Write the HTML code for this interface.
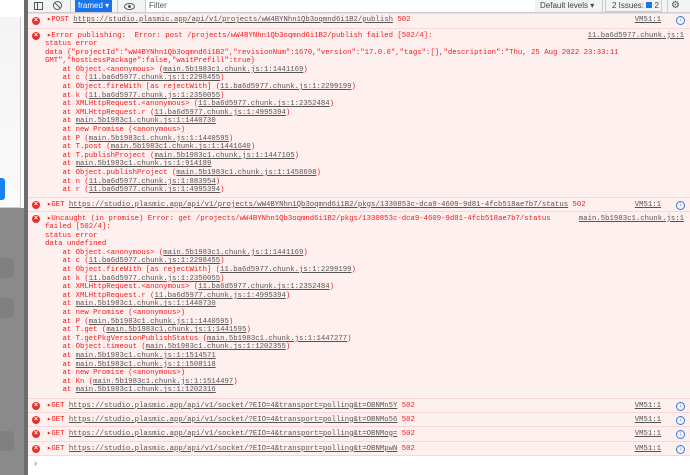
<!DOCTYPE html>
<html><head><meta charset="utf-8"><style>
*{margin:0;padding:0;box-sizing:border-box}
body{width:690px;height:475px;overflow:hidden;background:#fff;position:relative;font-family:"Liberation Mono",monospace;font-size:7.3px;color:#f01a1a}
.left{position:absolute;left:0;top:0;width:28px;height:475px;background:#8a8a8a}
.lw{position:absolute;left:0;top:0;width:24px;height:208px;background:#fff}
.lc{position:absolute;left:0;top:17px;width:21px;height:191px;background:linear-gradient(#f4f4f4,#fafafa);border-right:1px solid #ccc;border-bottom:1px solid #ccc}
.lb{position:absolute;left:0;top:178px;width:5px;height:22px;background:#1a82f0;border-radius:0 3px 3px 0}
.sep{position:absolute;left:24px;top:0;width:4px;height:475px;background:#6c6c6c}
.lbox{position:absolute;left:0;width:14px;height:20px;background:#808080;border-radius:0 4px 4px 0}
.tb{position:absolute;left:28px;top:0;width:662px;height:13px;background:#f1f3f4;border-bottom:1px solid #cbcdd1;font-family:"Liberation Sans",sans-serif;font-size:8px;color:#333}
.row{position:absolute;left:28px;width:662px;background:#fff0f0;border-top:1px solid #fbd6d6;line-height:8.6px;white-space:pre}
.ic{position:absolute;left:4px;width:8px;height:8px;border-radius:50%;background:#e8302b;color:#fff;font-family:"Liberation Sans",sans-serif;font-size:7px;line-height:8px;text-align:center;font-weight:bold}
.t{position:absolute;left:19px}
.tx{position:absolute;left:17px}
u{color:#555;text-decoration:underline}
.r{position:absolute;right:29px;color:#555;text-decoration:underline}
.r2{position:absolute;right:6px;color:#555;text-decoration:underline}
.vm{position:absolute;right:5px;width:9px;height:9px;border:1px solid #2d7be5;border-radius:50%;color:#2d7be5;font-size:6px;line-height:7px;text-align:center;font-family:"Liberation Sans",sans-serif}
.v{position:absolute;top:0;width:1px;height:12px;background:#ccc}
</style></head><body>
<div class="left"><div class="lw"></div><div class="lc"></div><div class="lb"></div>
<div class="lbox" style="top:258px"></div><div class="lbox" style="top:298px"></div><div class="lbox" style="top:431px"></div></div>
<div class="sep"></div>
<div class="tb">
<div style="position:absolute;left:6px;top:2px;width:9px;height:8px;border:1px solid #555"></div>
<div style="position:absolute;left:9px;top:2px;width:1px;height:8px;background:#555"></div>
<div style="position:absolute;left:25px;top:1px;width:9px;height:9px;border:1.3px solid #555;border-radius:50%"></div>
<div style="position:absolute;left:26px;top:5px;width:7px;height:1.3px;background:#555;transform:rotate(45deg)"></div>
<div class="v" style="left:42px"></div>
<div style="position:absolute;left:47px;top:0;width:37px;height:12px;background:#1a73e8;color:#fff;padding-left:3px;line-height:11px">framed ▾</div>
<div class="v" style="left:89px"></div>
<div style="position:absolute;left:96px;top:3px;width:11px;height:7px;border:1.3px solid #555;border-radius:50%"></div>
<div style="position:absolute;left:100px;top:5px;width:3px;height:3px;background:#555;border-radius:50%"></div>
<div style="position:absolute;left:117px;top:0;width:390px;height:12px;background:#fff;border-left:1px solid #ccc"></div>
<div style="position:absolute;left:121px;top:1px;color:#555">Filter</div>
<div style="position:absolute;left:512px;top:1px;color:#444">Default levels ▾</div>
<div class="v" style="left:574px"></div>
<div style="position:absolute;left:577px;top:0;width:57px;height:12px;border:1px solid #ccc;border-top:0;color:#444;padding-left:6px;line-height:11px">2 Issues: <span style="display:inline-block;width:6px;height:6px;background:#1a73e8"></span> 2</div>
<div class="v" style="left:639px"></div>
<div style="position:absolute;left:643px;top:0;color:#555;font-size:10px;line-height:11px">⚙</div>
</div>

<div class="row" style="top:13px;height:15px;padding-top:2px"><div class="ic" style="top:3px">×</div><div class="t">▸POST <u>https://studio.plasmic.app/api/v1/projects/wW4BYNhn1Qb3oqmnd6i1B2/publish</u> 502</div><span class="r">VM51:1</span><span class="vm">↓</span></div>

<div class="row" style="top:28px;height:170px;padding-top:2.5px"><div class="ic" style="top:3px">×</div><span class="r2">11.ba6d5977.chunk.js:1</span><div class="t">▸Error publishing:  Error: post /projects/wW4BYNhn1Qb3oqmnd6i1B2/publish failed [502/4]:</div><div class="tx" style="top:11px">status error
data {"projectId":"wW4BYNhn1Qb3oqmnd6i1B2","revisionNum":1670,"version":"17.0.0","tags":[],"description":"Thu, 25 Aug 2022 23:33:11
GMT","hostLessPackage":false,"waitPrefill":true}
    at Object.&lt;anonymous&gt; (<u>main.5b1983c1.chunk.js:1:1441169</u>)
    at c (<u>11.ba6d5977.chunk.js:1:2298455</u>)
    at Object.fireWith [as rejectWith] (<u>11.ba6d5977.chunk.js:1:2299199</u>)
    at k (<u>11.ba6d5977.chunk.js:1:2350055</u>)
    at XMLHttpRequest.&lt;anonymous&gt; (<u>11.ba6d5977.chunk.js:1:2352484</u>)
    at XMLHttpRequest.r (<u>11.ba6d5977.chunk.js:1:4995394</u>)
    at <u>main.5b1983c1.chunk.js:1:1440730</u>
    at new Promise (&lt;anonymous&gt;)
    at P (<u>main.5b1983c1.chunk.js:1:1440595</u>)
    at T.post (<u>main.5b1983c1.chunk.js:1:1441640</u>)
    at T.publishProject (<u>main.5b1983c1.chunk.js:1:1447105</u>)
    at <u>main.5b1983c1.chunk.js:1:914189</u>
    at Object.publishProject (<u>main.5b1983c1.chunk.js:1:1458698</u>)
    at n (<u>11.ba6d5977.chunk.js:1:883954</u>)
    at r (<u>11.ba6d5977.chunk.js:1:4995394</u>)</div></div>

<div class="row" style="top:197px;height:15px;padding-top:2.5px"><div class="ic" style="top:3px">×</div><div class="t">▸GET <u>https://studio.plasmic.app/api/v1/projects/wW4BYNhn1Qb3oqmnd6i1B2/pkgs/1330853c-dca9-4609-9d81-4fcb518ae7b7/status</u> 502</div><span class="r">VM51:1</span><span class="vm">↓</span></div>

<div class="row" style="top:211px;height:188px;padding-top:2.5px"><div class="ic" style="top:3px">×</div><span class="r2">main.5b1983c1.chunk.js:1</span><div class="t">▸Uncaught (in promise) Error: get /projects/wW4BYNhn1Qb3oqmnd6i1B2/pkgs/1330853c-dca9-4609-9d81-4fcb518ae7b7/status</div><div class="tx" style="top:11px">failed [502/4]:
status error
data undefined
    at Object.&lt;anonymous&gt; (<u>main.5b1983c1.chunk.js:1:1441169</u>)
    at c (<u>11.ba6d5977.chunk.js:1:2298455</u>)
    at Object.fireWith [as rejectWith] (<u>11.ba6d5977.chunk.js:1:2299199</u>)
    at k (<u>11.ba6d5977.chunk.js:1:2350055</u>)
    at XMLHttpRequest.&lt;anonymous&gt; (<u>11.ba6d5977.chunk.js:1:2352484</u>)
    at XMLHttpRequest.r (<u>11.ba6d5977.chunk.js:1:4995394</u>)
    at <u>main.5b1983c1.chunk.js:1:1440730</u>
    at new Promise (&lt;anonymous&gt;)
    at P (<u>main.5b1983c1.chunk.js:1:1440595</u>)
    at T.get (<u>main.5b1983c1.chunk.js:1:1441595</u>)
    at T.getPkgVersionPublishStatus (<u>main.5b1983c1.chunk.js:1:1447277</u>)
    at Object.timeout (<u>main.5b1983c1.chunk.js:1:1202355</u>)
    at <u>main.5b1983c1.chunk.js:1:1514571</u>
    at <u>main.5b1983c1.chunk.js:1:1508118</u>
    at new Promise (&lt;anonymous&gt;)
    at Kn (<u>main.5b1983c1.chunk.js:1:1514497</u>)
    at <u>main.5b1983c1.chunk.js:1:1202316</u></div></div>

<div class="row" style="top:398px;height:15px;padding-top:2.5px"><div class="ic" style="top:3px">×</div><div class="t">▸GET <u>https://studio.plasmic.app/api/v1/socket/?EIO=4&amp;transport=polling&amp;t=OBNMn5Y</u> 502</div><span class="r">VM51:1</span><span class="vm">↓</span></div>
<div class="row" style="top:412px;height:15px;padding-top:2.5px"><div class="ic" style="top:3px">×</div><div class="t">▸GET <u>https://studio.plasmic.app/api/v1/socket/?EIO=4&amp;transport=polling&amp;t=OBNMo56</u> 502</div><span class="r">VM51:1</span><span class="vm">↓</span></div>
<div class="row" style="top:426px;height:15px;padding-top:2.5px"><div class="ic" style="top:3px">×</div><div class="t">▸GET <u>https://studio.plasmic.app/api/v1/socket/?EIO=4&amp;transport=polling&amp;t=OBNMog=</u> 502</div><span class="r">VM51:1</span><span class="vm">↓</span></div>
<div class="row" style="top:441px;height:15px;padding-top:2.5px;border-bottom:1px solid #fbd6d6"><div class="ic" style="top:3px">×</div><div class="t">▸GET <u>https://studio.plasmic.app/api/v1/socket/?EIO=4&amp;transport=polling&amp;t=OBNMpwN</u> 502</div><span class="r">VM51:1</span><span class="vm">↓</span></div>
<div style="position:absolute;left:34px;top:458px;color:#1a73e8;font-size:9px;font-family:'Liberation Sans',sans-serif">›</div>
</body></html>
